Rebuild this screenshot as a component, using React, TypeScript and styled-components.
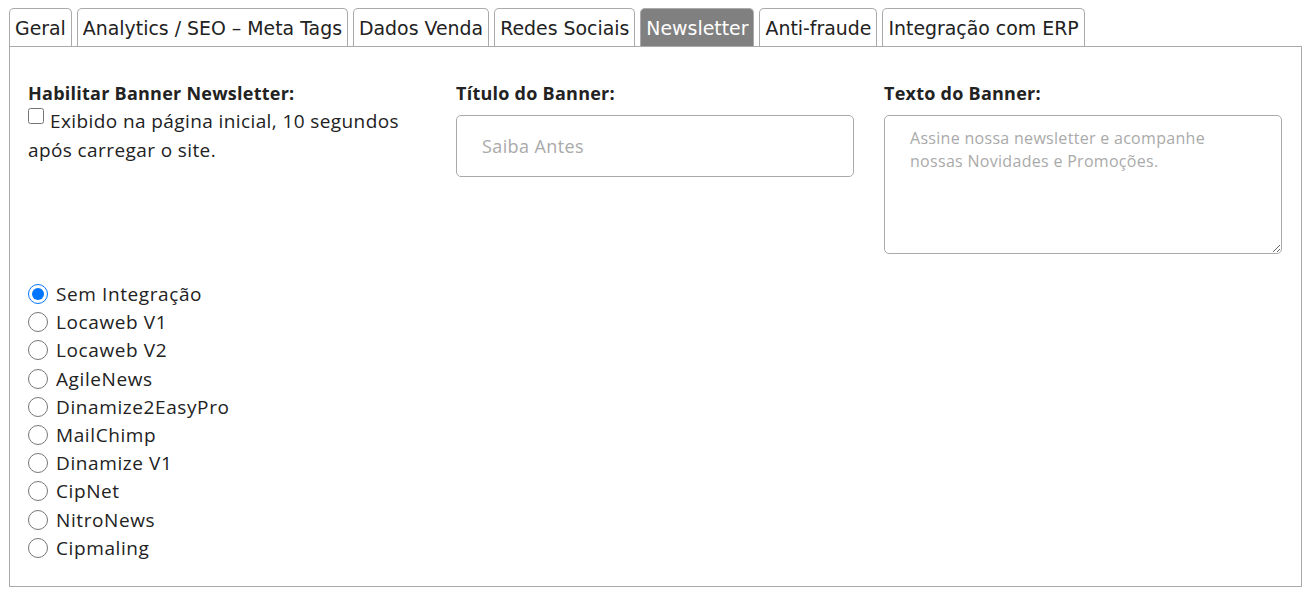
import styled, { createGlobalStyle } from "styled-components";

const GlobalStyle = createGlobalStyle`
    body {
        margin: 8px 10px 8px 9px;
        background: #fff;
        font-family: "Open Sans", Arial, sans-serif;
        color: #212529;
    }
`;

const Wrap = styled.div`
    display: flex;
    flex-direction: column;
`;

const TabBar = styled.ul`
    display: flex;
    gap: 5px;
    margin: 0 0 -1px;
    padding: 0;
    list-style: none;
`;

const Tab = styled.li<{ $active?: boolean }>`
    height: 39px;
    box-sizing: border-box;
    display: flex;
    align-items: center;
    padding: 0 5px;
    border: 1px solid #aaa;
    border-bottom: 0;
    border-radius: 5px 5px 0 0;
    font-family: "DejaVu Sans", Verdana, sans-serif;
    font-size: 18.9px;
    color: ${({ $active }) => ($active ? "#fff" : "#222")};
    background: ${({ $active }) => ($active ? "#808080" : "#fff")};
`;

const Panel = styled.div`
    box-sizing: border-box;
    min-height: 540px;
    border: 1px solid #aaa;
    padding: 34px 19px 24px 18px;
`;

const Columns = styled.div`
    display: grid;
    grid-template-columns: repeat(3, 398px);
    gap: 30px;
`;

const Field = styled.div`
    display: flex;
    flex-direction: column;
`;

const Label = styled.label`
    font-weight: 700;
    font-size: 18px;
    letter-spacing: 0.25px;
    line-height: 24px;
    color: #222;
    margin-bottom: 10px;
`;

const CheckText = styled.label`
    font-size: 19px;
    letter-spacing: 0.4px;
    line-height: 29px;
    color: #222;
    margin-top: -8px;
`;

const Checkbox = styled.input`
    width: 16px;
    height: 16px;
    margin: 0 6px 0 0;
    vertical-align: 4px;
`;

const TextInput = styled.input`
    height: 62px;
    box-sizing: border-box;
    border: 1px solid #aaa;
    border-radius: 5px;
    padding: 0 25px;
    font-family: inherit;
    font-size: 18px;
    letter-spacing: 0.4px;
    color: #222;
    &::placeholder {
        color: #aaa;
    }
`;

const TextArea = styled.textarea`
    height: 139px;
    box-sizing: border-box;
    border: 1px solid #aaa;
    border-radius: 5px;
    padding: 11px 25px;
    font-family: inherit;
    font-size: 16px;
    letter-spacing: 0.3px;
    line-height: 23px;
    color: #222;
    &::placeholder {
        color: #aaa;
    }
`;

const RadioList = styled.div`
    display: flex;
    flex-direction: column;
    margin-top: 26px;
`;

const RadioRow = styled.label`
    display: flex;
    align-items: center;
    height: 28.2px;
    font-size: 19px;
    letter-spacing: 0.6px;
    color: #222;
`;

const Radio = styled.input`
    width: 20px;
    height: 20px;
    margin: 0 8px 0 0;
    accent-color: #0075ff;
`;

const tabs = [
    "Geral",
    "Analytics / SEO – Meta Tags",
    "Dados Venda",
    "Redes Sociais",
    "Newsletter",
    "Anti-fraude",
    "Integração com ERP",
];

const integrations = [
    "Sem Integração",
    "Locaweb V1",
    "Locaweb V2",
    "AgileNews",
    "Dinamize2EasyPro",
    "MailChimp",
    "Dinamize V1",
    "CipNet",
    "NitroNews",
    "Cipmaling",
];

export default function App() {
    return (
        <Wrap>
            <GlobalStyle />
            <TabBar>
                {tabs.map((tab) => (
                    <Tab key={tab} $active={tab === "Newsletter"}>
                        {tab}
                    </Tab>
                ))}
            </TabBar>
            <Panel>
                <Columns>
                    <Field>
                        <Label>Habilitar Banner Newsletter:</Label>
                        <CheckText>
                            <Checkbox type="checkbox" />
                            Exibido na página inicial, 10 segundos após carregar o site.
                        </CheckText>
                    </Field>
                    <Field>
                        <Label>Título do Banner:</Label>
                        <TextInput placeholder="Saiba Antes" />
                    </Field>
                    <Field>
                        <Label>Texto do Banner:</Label>
                        <TextArea placeholder="Assine nossa newsletter e acompanhe nossas Novidades e Promoções." />
                    </Field>
                </Columns>
                <RadioList>
                    {integrations.map((name, i) => (
                        <RadioRow key={name}>
                            <Radio type="radio" name="integracao" defaultChecked={i === 0} />
                            {name}
                        </RadioRow>
                    ))}
                </RadioList>
            </Panel>
        </Wrap>
    );
}
